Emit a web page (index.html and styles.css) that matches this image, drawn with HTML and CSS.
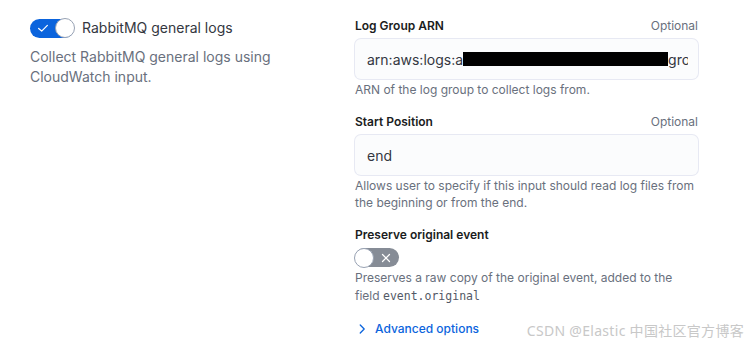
FILE: index.html
```html
<!DOCTYPE html>
<html lang="en">
<head>
  <meta charset="UTF-8" />
  <title>RabbitMQ integration settings</title>
  <link rel="stylesheet" href="styles.css">
</head>
<body>

  <div class="settings">
    <div class="stream">
      <div class="stream-head">
        <span class="switch switch-on">
          <svg class="switch-icon" viewBox="0 0 16 16" fill="none" stroke="white" stroke-width="1.4" stroke-linecap="round" stroke-linejoin="round">
            <polyline points="3 8.5 6.5 11.5 13 5" />
          </svg>
          <span class="knob"></span>
        </span>
        <span class="stream-title">RabbitMQ general logs</span>
      </div>
      <p class="stream-desc">Collect RabbitMQ general logs using CloudWatch input.</p>
    </div>

    <div class="fields">
      <div class="form-row">
        <div class="label-row">
          <span class="label">Log Group ARN</span>
          <span class="optional">Optional</span>
        </div>
        <div class="field">
          <span class="field-text">arn:aws:logs:a<span class="redacted"></span>grou</span>
        </div>
        <div class="help">ARN of the log group to collect logs from.</div>
      </div>

      <div class="form-row">
        <div class="label-row">
          <span class="label">Start Position</span>
          <span class="optional">Optional</span>
        </div>
        <div class="field">
          <span class="field-text">end</span>
        </div>
        <div class="help">Allows user to specify if this input should read log files from the beginning or from the end.</div>
      </div>

      <div class="form-row">
        <div class="label-row">
          <span class="label">Preserve original event</span>
        </div>
        <span class="switch switch-off">
          <span class="knob"></span>
          <svg class="switch-icon" viewBox="0 0 16 16" fill="none" stroke="white" stroke-width="1.4" stroke-linecap="round">
            <line x1="4" y1="4" x2="12" y2="12" />
            <line x1="12" y1="4" x2="4" y2="12" />
          </svg>
        </span>
        <div class="help help-switch">Preserves a raw copy of the original event, added to the field <code>event.original</code></div>
      </div>

      <button class="advanced">
        <svg class="chevron" viewBox="0 0 16 16" fill="none" stroke="currentColor" stroke-width="1.5" stroke-linecap="round" stroke-linejoin="round">
          <polyline points="6 3.5 10.5 8 6 12.5" />
        </svg>
        Advanced options
      </button>
    </div>
  </div>

  <div class="watermark">CSDN @Elastic 中国社区官方博客</div>

</body>
</html>
```

FILE: styles.css
```css
* {
  box-sizing: border-box;
}

html, body {
  margin: 0;
  background: #fff;
  font-family: Inter, "Noto Sans", sans-serif;
  color: #343741;
}

body {
  position: relative;
  height: 349px;
  overflow: hidden;
}

.settings {
  display: flex;
  padding: 17px 0 0 30px;
}

.stream {
  width: 325px;
  padding-top: 1px;
}

.stream-head {
  display: flex;
  align-items: center;
  gap: 8px;
}

.stream-title {
  font-size: 14px;
  line-height: 20px;
  color: #343741;
}

.stream-desc {
  margin: 9px 0 0;
  width: 260px;
  font-size: 14px;
  line-height: 20px;
  color: #69707d;
}

/* switches */
.switch {
  position: relative;
  display: flex;
  align-items: center;
  justify-content: space-between;
  width: 44px;
  height: 19px;
  border-radius: 10px;
  flex-shrink: 0;
}

.switch-on { background: #0b64dd; }
.switch-off { background: #868c96; margin-top: 1px; }

.knob {
  width: 20px;
  height: 20px;
  border-radius: 50%;
  background: #fff;
  border: 1px solid #98a2b3;
  margin: 0 -1px;
}

.switch-icon {
  width: 14px;
  height: 14px;
  margin: 0 6px;
}

/* form rows */
.fields {
  width: 343px;
}

.form-row {
  margin-bottom: 15px;
}

.label-row {
  display: flex;
  justify-content: space-between;
  align-items: baseline;
  line-height: 18px;
  margin-bottom: 4px;
}

.label {
  font-size: 12px;
  font-weight: 600;
  color: #1a1c21;
}

.optional {
  font-size: 12px;
  color: #69707d;
}

.field {
  display: flex;
  align-items: center;
  height: 40px;
  padding: 0 10px 0 12px;
  border-radius: 6px;
  background: #fbfcfd;
  box-shadow: 0 0 0 1px rgba(17, 43, 134, 0.1);
  font-size: 14px;
  color: #343741;
}

.field-text {
  display: flex;
  align-items: center;
  white-space: nowrap;
  overflow: hidden;
  min-width: 0;
}

.redacted {
  display: inline-block;
  width: 205px;
  height: 14px;
  background: #000;
  flex-shrink: 0;
}

.help {
  margin-top: 2px;
  font-size: 12px;
  line-height: 17px;
  color: #69707d;
}

.help-switch {
  line-height: 18px;
}

.help code {
  font-family: "DejaVu Sans Mono", monospace;
  font-size: 11.5px;
  line-height: 16px;
  color: #535966;
}

.advanced {
  display: flex;
  align-items: center;
  gap: 6px;
  margin-top: 16px;
  padding: 0;
  border: none;
  background: none;
  font-family: inherit;
  font-size: 12px;
  font-weight: 500;
  color: #0b64dd;
  cursor: pointer;
}

.chevron {
  width: 14px;
  height: 14px;
}

.watermark {
  position: absolute;
  right: 8px;
  bottom: 9px;
  font-family: "Noto Sans", "Noto Sans CJK SC", sans-serif;
  font-size: 14px;
  color: #c8c8c8;
  letter-spacing: 0.3px;
}
```
